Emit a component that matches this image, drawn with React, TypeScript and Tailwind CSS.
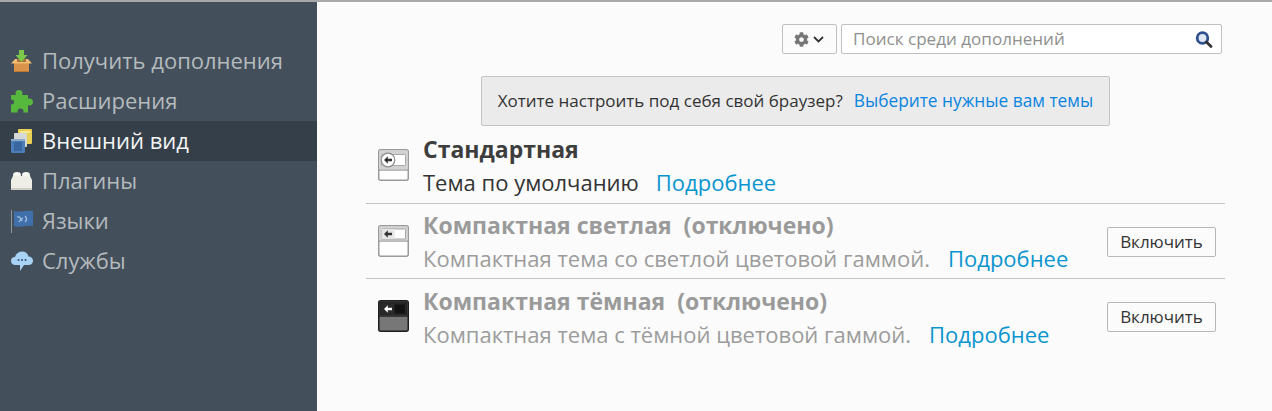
import { FaCog } from "react-icons/fa";

const sans = "font-['Open_Sans','Noto_Sans',sans-serif]";

function GetIcon() {
  return (
    <svg width="21" height="22" viewBox="0 0 21 22">
      <rect x="3" y="12" width="15" height="10" fill="#d9934a" />
      <rect x="3" y="21" width="15" height="1" fill="#b9772f" />
      <path d="M0 13.500 L4 9 H17 L21 13.500 H0 Z" fill="#f2bd72" />
      <rect x="6" y="9" width="9" height="3" fill="#a8743c" />
      <path d="M8 0 H13 V5 H16.500 L10.500 12 L4.500 5 H8 Z" fill="#7cc94a" />
    </svg>
  );
}
function PuzzleIcon() {
  return (
    <svg width="23" height="23" viewBox="0 0 23 23">
      <path d="M1 5 H6 C5.500 4 5.500 3.500 5.500 3 C5.500 1 7 0 9 0 C11 0 12.500 1 12.500 3 C12.500 3.500 12.500 4 12 5 H18 V9 C18.500 8.500 19 8.500 19.500 8.500 C21.500 8.500 23 10 23 12 C23 14 21.500 15.500 19.500 15.500 C19 15.500 18.500 15.500 18 15 V22.500 H1 Z" fill="#57b83e" />
      <circle cx="1.500" cy="12" r="2.500" fill="#43505c" />
      <circle cx="10.500" cy="21.500" r="3" fill="#43505c" />
    </svg>
  );
}
function AppearanceIcon() {
  return (
    <svg width="21" height="24" viewBox="0 0 21 24">
      <rect x="7" y="0" width="14" height="15" rx="1" fill="#e8cf55" />
      <rect x="9" y="2" width="10" height="2" fill="#f6e88f" />
      <rect x="3" y="4" width="13" height="14" rx="1" fill="#d6d8d6" />
      <rect x="0" y="10" width="14" height="14" rx="1" fill="#4b7db8" />
      <rect x="3" y="13" width="8" height="9" fill="#3a66a0" />
      <rect x="0" y="10" width="14" height="2" fill="#8aa9cc" />
    </svg>
  );
}
function PluginIcon() {
  return (
    <svg width="21" height="18" viewBox="0 0 21 18">
      <ellipse cx="6" cy="3" rx="4" ry="3" fill="#f7f7f2" />
      <ellipse cx="15" cy="3" rx="4" ry="3" fill="#f7f7f2" />
      <path d="M2 4 H19 L21 8 V18 H0 V8 Z" fill="#eeede6" />
      <rect x="0" y="16" width="21" height="2" fill="#d0cfc6" />
    </svg>
  );
}
function FlagIcon() {
  return (
    <svg width="22" height="23" viewBox="0 0 22 23">
      <rect x="0" y="0" width="1" height="23" fill="#8e989f" />
      <path d="M3 1 C8 3 13 0 22 1 V16 C14 15 9 18 3 16 Z" fill="#3f70ac" />
      <path d="M6 7 C9 6 10 8 11 11 M14 6 C16 8 16 10 14 12 M8 12 C9 10 10 9 12 8" stroke="#a9c3e0" strokeWidth="1.200" fill="none" />
    </svg>
  );
}
function ChatIcon() {
  return (
    <svg width="22" height="20" viewBox="0 0 22 20">
      <path d="M5 14 C1.500 14 0 12 0 9.500 C0 7 2 6 4 6 C5 2.500 8 0.500 11 0.500 C14.500 0.500 17 2.500 17.500 5.500 C20 5.500 22 7.500 22 9.500 C22 12.500 20 14 17 14 H13 L9 20 V14 Z" fill="#a9d3f5" />
      <circle cx="7.500" cy="9" r="1" fill="#33506e" />
      <circle cx="11" cy="9" r="1" fill="#33506e" />
      <circle cx="14.500" cy="9" r="1" fill="#33506e" />
    </svg>
  );
}
function ThemeIcon({ kind }: { kind: "default" | "light" | "dark" }) {
  const dark = kind === "dark";
  const isDefault = kind === "default";
  const split = isDefault ? 20.500 : 15.500;
  const innerY = isDefault ? 5.500 : 4;
  const innerH = isDefault ? 11 : 10;
  const cy = innerY + innerH / 2;
  return (
    <svg width="31" height="32" viewBox="0 0 31 32">
      <rect x="0.750" y="0.750" width="29.500" height="30.500" rx="2" fill={dark ? "#777" : "#fff"} stroke={dark ? "#1c1c1c" : "#9a9a9a"} strokeWidth="1.500" />
      <rect x="1.500" y="1.500" width="28" height={split - 1.500} fill={dark ? "#222" : "#d2d2d2"} />
      <rect x="1" y={split} width="29" height="1.200" fill={dark ? "#1c1c1c" : "#9a9a9a"} />
      <rect x="3.500" y={innerY} width="24" height={innerH} rx="1" fill={dark ? "#111" : "#fff"} stroke={dark ? "#2a2a2a" : "#a8a8a8"} />
      {isDefault && <circle cx="10" cy={cy} r="6.800" fill="#fff" stroke="#8a8a8a" strokeWidth="1.200" />}
      {!isDefault && <rect x="3.500" y={innerY} width="13" height={innerH} fill={dark ? "#2a2a2a" : "#e6e6e6"} />}
      <path d={`M6 ${cy} L9.800 ${cy - 3.800} V${cy - 1.200} H14 V${cy + 1.200} H9.800 V${cy + 3.800} Z`} fill={dark ? "#fff" : "#333"} />
    </svg>
  );
}

const nav = [
  { label: "Получить дополнения", icon: <GetIcon /> },
  { label: "Расширения", icon: <PuzzleIcon /> },
  { label: "Внешний вид", icon: <AppearanceIcon />, active: true },
  { label: "Плагины", icon: <PluginIcon /> },
  { label: "Языки", icon: <FlagIcon /> },
  { label: "Службы", icon: <ChatIcon /> },
];

function Row({ kind, title, suffix, desc, enable, border }: { kind: "default" | "light" | "dark"; title: string; suffix?: string; desc: string; enable?: boolean; border?: boolean }) {
  return (
    <div className={`flex h-[75.500px] items-start pl-[12px] pr-[9px] ${border ? "border-b border-[#c4c4c4]" : ""}`}>
      <div className="mt-[21px] mr-[14px] shrink-0"><ThemeIcon kind={kind} /></div>
      <div className={`flex-1 min-w-0 ${kind === "dark" ? "pt-[7px]" : "pt-[6px]"}`}>
        <div className={`h-[30px] text-[23px] font-bold leading-[30px] whitespace-pre ${enable ? "text-[#9a9a9a]" : "text-[#3d3d3d]"}`}>
          {title}{suffix && <span>  {suffix}</span>}
        </div>
        <div className={`mt-[3px] h-[30px] text-[22px] leading-[30px] whitespace-pre ${enable ? "text-[#9c9c9c]" : "text-[#333333]"}`}>
          {desc}<span className={`text-[#0a95cf] ${kind === "default" ? "ml-[17px]" : "ml-[18px]"}`}>Подробнее</span>
        </div>
      </div>
      {enable && (
        <button className={`mt-[23px] h-[30px] w-[109px] rounded-[2px] border border-[#b8b8b8] bg-[#fbfbfb] text-[17px] text-[#333] ${sans}`}>Включить</button>
      )}
    </div>
  );
}

export default function App() {
  return (
    <div className={`flex h-[411px] w-[1272px] flex-col overflow-hidden bg-[#fbfbfb] ${sans}`}>
      <div className="h-[2px] shrink-0 bg-[#a9a9a9]" />
      <div className="flex min-h-0 flex-1">
        <aside className="w-[317px] shrink-0 bg-[#43505c] pt-[39px]">
          {nav.map((n) => (
            <div key={n.label} className={`flex h-[40px] items-center ${n.active ? "bg-[#343f49] text-[#f4f5f5]" : "text-[#b5babd]"}`}>
              <div className="flex w-[42px] shrink-0 items-center justify-center pl-[1px]">{n.icon}</div>
              <span className="mb-[2px] text-[22px] leading-[30px] whitespace-pre">{n.label}</span>
            </div>
          ))}
        </aside>
        <main className="flex-1 pl-[49px] pr-[47px]">
          <div className="flex justify-end gap-[4px] pt-[22px] pr-[3px]">
            <button className="flex h-[30px] w-[55px] items-center justify-center gap-[4px] rounded-[2px] border border-[#c0c0c0] bg-[#fbfbfb] pr-[2px]">
              <FaCog size={15} color="#777777" />
              <svg width="11" height="7" viewBox="0 0 11 7" fill="none" stroke="#333" strokeWidth="1.800"><path d="M1 1 L5.500 5.500 L10 1" /></svg>
            </button>
            <div className="flex h-[30px] w-[381px] items-center justify-between rounded-[2px] border border-[#c0c0c0] bg-white pl-[11px] pr-[8px]">
              <span className="text-[17.070px] text-[#8f8f8f]">Поиск среди дополнений</span>
              <svg width="18" height="17" viewBox="0 0 18 17" fill="none"><circle cx="7.500" cy="7" r="5.300" stroke="#2f4f8f" strokeWidth="2.800" fill="#dfe8f4" /><path d="M11.500 11 L16 15.500" stroke="#333" strokeWidth="2.800" strokeLinecap="round" /></svg>
            </div>
          </div>
          <div className="mt-[22px] flex justify-center">
            <div className="flex h-[50px] w-[629px] items-center justify-center rounded-[2px] border border-[#c4c4c4] bg-[#ebebeb] text-[17px]">
              <span className="text-[#333]">Хотите настроить под себя свой браузер?</span>
              <span className="ml-[11px] text-[17.300px] text-[#0a84e0]">Выберите нужные вам темы</span>
            </div>
          </div>
          <div className="mt-[2px]">
            <Row kind="default" title="Стандартная" desc="Тема по умолчанию" border />
            <Row kind="light" title="Компактная светлая" suffix="(отключено)" desc="Компактная тема со светлой цветовой гаммой." enable border />
            <Row kind="dark" title="Компактная тёмная" suffix="(отключено)" desc="Компактная тема с тёмной цветовой гаммой." enable />
          </div>
        </main>
      </div>
    </div>
  );
}
